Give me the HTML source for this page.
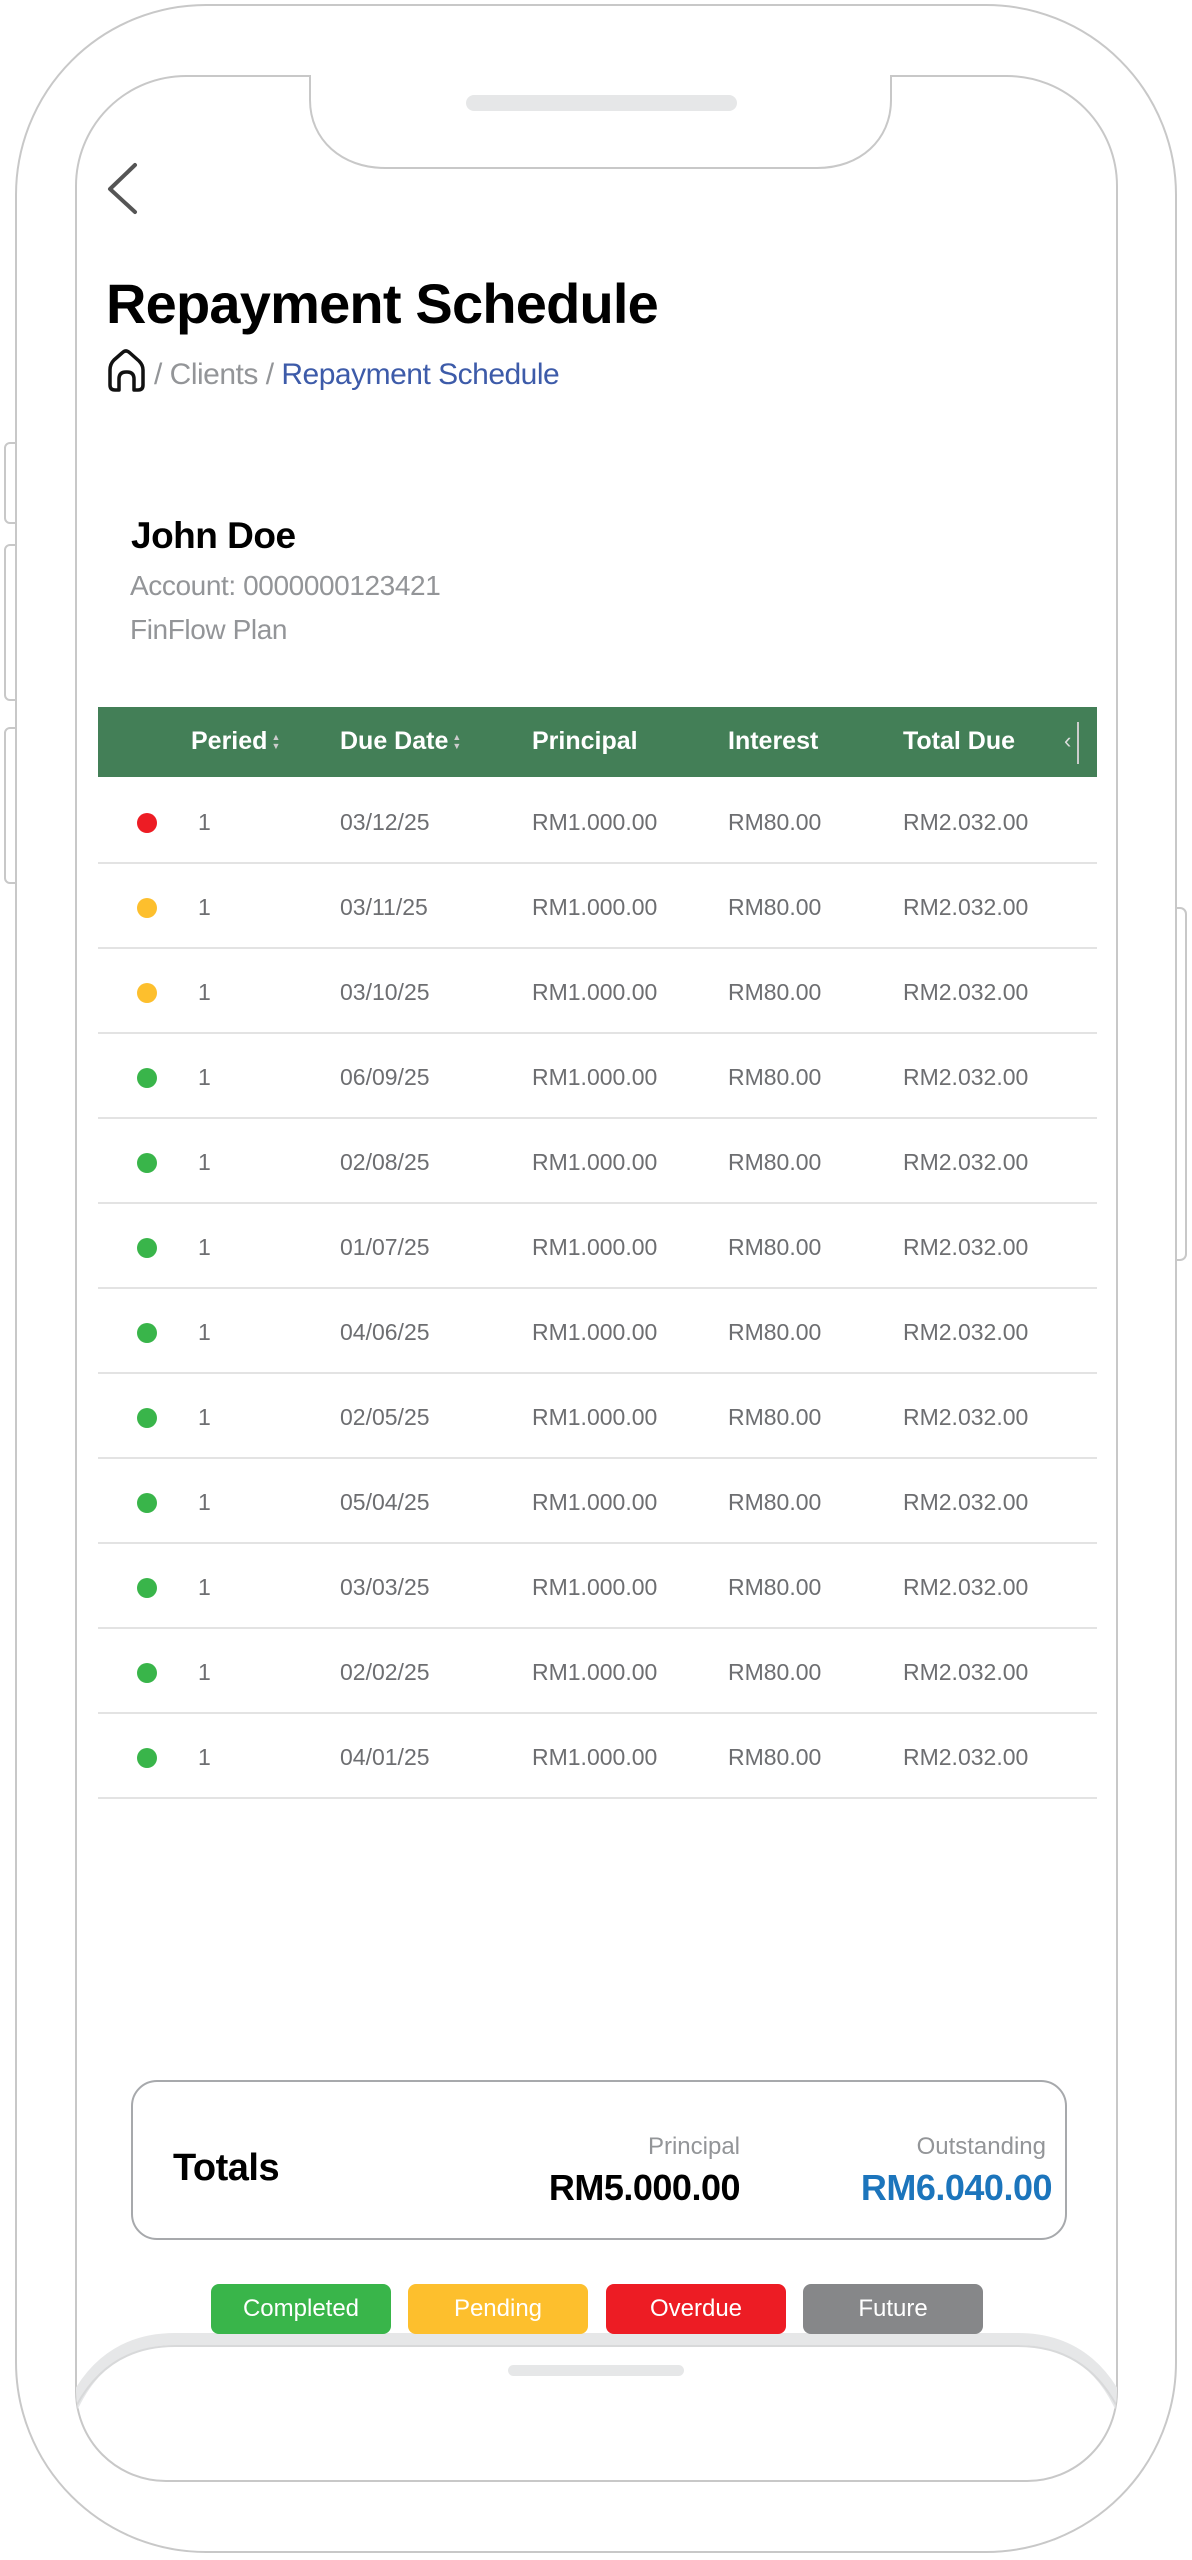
<!DOCTYPE html>
<html><head><meta charset="utf-8">
<style>
*{margin:0;padding:0;box-sizing:border-box}
body{width:1192px;height:2560px;background:#fff;position:relative;overflow:hidden;font-family:"Liberation Sans",sans-serif}
.t{position:absolute;white-space:nowrap;line-height:1}
.hd{color:#fff;font-size:25px;top:729px}
.srt{display:inline-block;vertical-align:middle;font-size:9px;line-height:9px;color:#ccc;margin-left:4px}
.r{position:absolute;left:98px;width:999px;height:85px;border-bottom:2px solid #e3e3e3}
.r span{position:absolute;top:32px;font-size:23px;color:#6d6e71;line-height:1}
.dot{position:absolute;left:39px;top:34px;width:20px;height:20px;border-radius:50%}
.b{position:absolute;top:2284px;height:50px;width:180px;border-radius:8px;color:#fff;font-size:24px;text-align:center;line-height:50px}
</style></head><body>
<svg width="1192" height="2560" style="position:absolute;left:0;top:0">
<defs><clipPath id="scr"><path d="M186 76 A110 110 0 0 0 76 186 V2391 A90 90 0 0 0 166 2481 H1027 A90 90 0 0 0 1117 2391 V186 A110 110 0 0 0 1007 76 Z"/></clipPath></defs>
<rect x="16" y="5" width="1160" height="2547" rx="190" fill="#fff" stroke="#c8c8c8" stroke-width="2"/>
<path d="M16 443 h-6 a5 5 0 0 0 -5 5 v70 a5 5 0 0 0 5 5 h6 M16 545 h-6 a5 5 0 0 0 -5 5 v145 a5 5 0 0 0 5 5 h6 M16 728 h-6 a5 5 0 0 0 -5 5 v145 a5 5 0 0 0 5 5 h6" fill="none" stroke="#c8c8c8" stroke-width="2"/>
<path d="M1176 908 h4 a6 6 0 0 1 6 6 v340 a6 6 0 0 1 -6 6 h-4" fill="none" stroke="#c8c8c8" stroke-width="2"/>
<path d="M310 76 H186 A110 110 0 0 0 76 186 V2391 A90 90 0 0 0 166 2481 H1027 A90 90 0 0 0 1117 2391 V186 A110 110 0 0 0 1007 76 H891 V100 C891 140 860 168 817 168 H385 C342 168 310 140 310 100 Z" fill="#fff" stroke="#c8c8c8" stroke-width="2"/>
<rect x="466" y="95" width="271" height="16" rx="8" fill="#e6e7e8"/>
<g clip-path="url(#scr)">
<path d="M60 2440 C80 2370 120 2339 175 2339 H1018 C1073 2339 1113 2370 1133 2440" fill="none" stroke="#e6e7e8" stroke-width="12"/>
<path d="M60 2447 C80 2377 120 2346 175 2346 H1018 C1073 2346 1113 2377 1133 2447" fill="none" stroke="#d8d9da" stroke-width="2"/>
</g>
<rect x="508" y="2365" width="176" height="11" rx="5.5" fill="#e6e7e8"/>
<path d="M135 165 L110 189 L135 212" fill="none" stroke="#555" stroke-width="4" stroke-linecap="round" stroke-linejoin="round"/>
<path d="M110 385 V370 Q110 364 114 360 L122 353 Q126 349 130 353 L139 361 Q143 365 143 370 V385 Q143 390 138 390 H134 V379 Q134 372 127 372 H126 Q119 372 119 379 V390 H115 Q110 390 110 385 Z" fill="none" stroke="#111" stroke-width="3.5" stroke-linejoin="round"/>
</svg>
<div class="t" style="left:106px;top:276px;font-size:56px;font-weight:bold;color:#000;letter-spacing:-0.8px">Repayment Schedule</div>
<div class="t" style="left:154px;top:360px;font-size:30px;color:#939598;letter-spacing:-0.5px">/ Clients / <span style="color:#3d5ba9">Repayment Schedule</span></div>
<div class="t" style="left:131px;top:517px;font-size:37px;font-weight:bold;color:#000;letter-spacing:-0.5px">John Doe</div>
<div class="t" style="left:130px;top:572px;font-size:28px;color:#939598;letter-spacing:-0.4px">Account: 0000000123421</div>
<div class="t" style="left:130px;top:616px;font-size:28px;color:#939598;letter-spacing:-0.4px">FinFlow Plan</div>
<div style="position:absolute;left:98px;top:707px;width:999px;height:70px;background:#437f57"></div>
<div class="t hd" style="left:191px;font-weight:bold">Peried<span class="srt">&#9650;<br>&#9660;</span></div>
<div class="t hd" style="left:340px;font-weight:bold">Due Date<span class="srt">&#9650;<br>&#9660;</span></div>
<div class="t hd" style="left:532px;font-weight:bold">Principal</div>
<div class="t hd" style="left:728px;font-weight:bold">Interest</div>
<div class="t hd" style="left:903px;font-weight:bold">Total Due</div>
<div class="t" style="left:1064px;top:730px;font-size:22px;color:#ddd">&lsaquo;</div>
<div style="position:absolute;left:1077px;top:722px;width:2px;height:42px;background:#ccc"></div>
<div class="r" style="top:779px"><i class="dot" style="background:#ed1c24"></i><span style="left:100px">1</span><span style="left:242px">03/12/25</span><span style="left:434px">RM1.000.00</span><span style="left:630px">RM80.00</span><span style="left:805px">RM2.032.00</span></div>
<div class="r" style="top:864px"><i class="dot" style="background:#fdbf2d"></i><span style="left:100px">1</span><span style="left:242px">03/11/25</span><span style="left:434px">RM1.000.00</span><span style="left:630px">RM80.00</span><span style="left:805px">RM2.032.00</span></div>
<div class="r" style="top:949px"><i class="dot" style="background:#fdbf2d"></i><span style="left:100px">1</span><span style="left:242px">03/10/25</span><span style="left:434px">RM1.000.00</span><span style="left:630px">RM80.00</span><span style="left:805px">RM2.032.00</span></div>
<div class="r" style="top:1034px"><i class="dot" style="background:#39b54a"></i><span style="left:100px">1</span><span style="left:242px">06/09/25</span><span style="left:434px">RM1.000.00</span><span style="left:630px">RM80.00</span><span style="left:805px">RM2.032.00</span></div>
<div class="r" style="top:1119px"><i class="dot" style="background:#39b54a"></i><span style="left:100px">1</span><span style="left:242px">02/08/25</span><span style="left:434px">RM1.000.00</span><span style="left:630px">RM80.00</span><span style="left:805px">RM2.032.00</span></div>
<div class="r" style="top:1204px"><i class="dot" style="background:#39b54a"></i><span style="left:100px">1</span><span style="left:242px">01/07/25</span><span style="left:434px">RM1.000.00</span><span style="left:630px">RM80.00</span><span style="left:805px">RM2.032.00</span></div>
<div class="r" style="top:1289px"><i class="dot" style="background:#39b54a"></i><span style="left:100px">1</span><span style="left:242px">04/06/25</span><span style="left:434px">RM1.000.00</span><span style="left:630px">RM80.00</span><span style="left:805px">RM2.032.00</span></div>
<div class="r" style="top:1374px"><i class="dot" style="background:#39b54a"></i><span style="left:100px">1</span><span style="left:242px">02/05/25</span><span style="left:434px">RM1.000.00</span><span style="left:630px">RM80.00</span><span style="left:805px">RM2.032.00</span></div>
<div class="r" style="top:1459px"><i class="dot" style="background:#39b54a"></i><span style="left:100px">1</span><span style="left:242px">05/04/25</span><span style="left:434px">RM1.000.00</span><span style="left:630px">RM80.00</span><span style="left:805px">RM2.032.00</span></div>
<div class="r" style="top:1544px"><i class="dot" style="background:#39b54a"></i><span style="left:100px">1</span><span style="left:242px">03/03/25</span><span style="left:434px">RM1.000.00</span><span style="left:630px">RM80.00</span><span style="left:805px">RM2.032.00</span></div>
<div class="r" style="top:1629px"><i class="dot" style="background:#39b54a"></i><span style="left:100px">1</span><span style="left:242px">02/02/25</span><span style="left:434px">RM1.000.00</span><span style="left:630px">RM80.00</span><span style="left:805px">RM2.032.00</span></div>
<div class="r" style="top:1714px"><i class="dot" style="background:#39b54a"></i><span style="left:100px">1</span><span style="left:242px">04/01/25</span><span style="left:434px">RM1.000.00</span><span style="left:630px">RM80.00</span><span style="left:805px">RM2.032.00</span></div>
<div style="position:absolute;left:131px;top:2080px;width:936px;height:160px;border:2px solid #a7a9ac;border-radius:26px"></div>
<div class="t" style="left:173px;top:2149px;font-size:38px;font-weight:bold;color:#000;letter-spacing:-0.5px">Totals</div>
<div class="t" style="right:452px;top:2135px;font-size:24px;color:#939598">Principal</div>
<div class="t" style="right:452px;top:2170px;font-size:36px;font-weight:bold;color:#000;letter-spacing:-0.5px">RM5.000.00</div>
<div class="t" style="right:146px;top:2135px;font-size:24px;color:#939598">Outstanding</div>
<div class="t" style="right:140px;top:2170px;font-size:36px;font-weight:bold;color:#1c75bc;letter-spacing:-0.5px">RM6.040.00</div>
<div class="b" style="left:211px;background:#39b54a">Completed</div>
<div class="b" style="left:408px;background:#fdbf2d">Pending</div>
<div class="b" style="left:606px;background:#ed1c24">Overdue</div>
<div class="b" style="left:803px;background:#868789">Future</div>
</body></html>
